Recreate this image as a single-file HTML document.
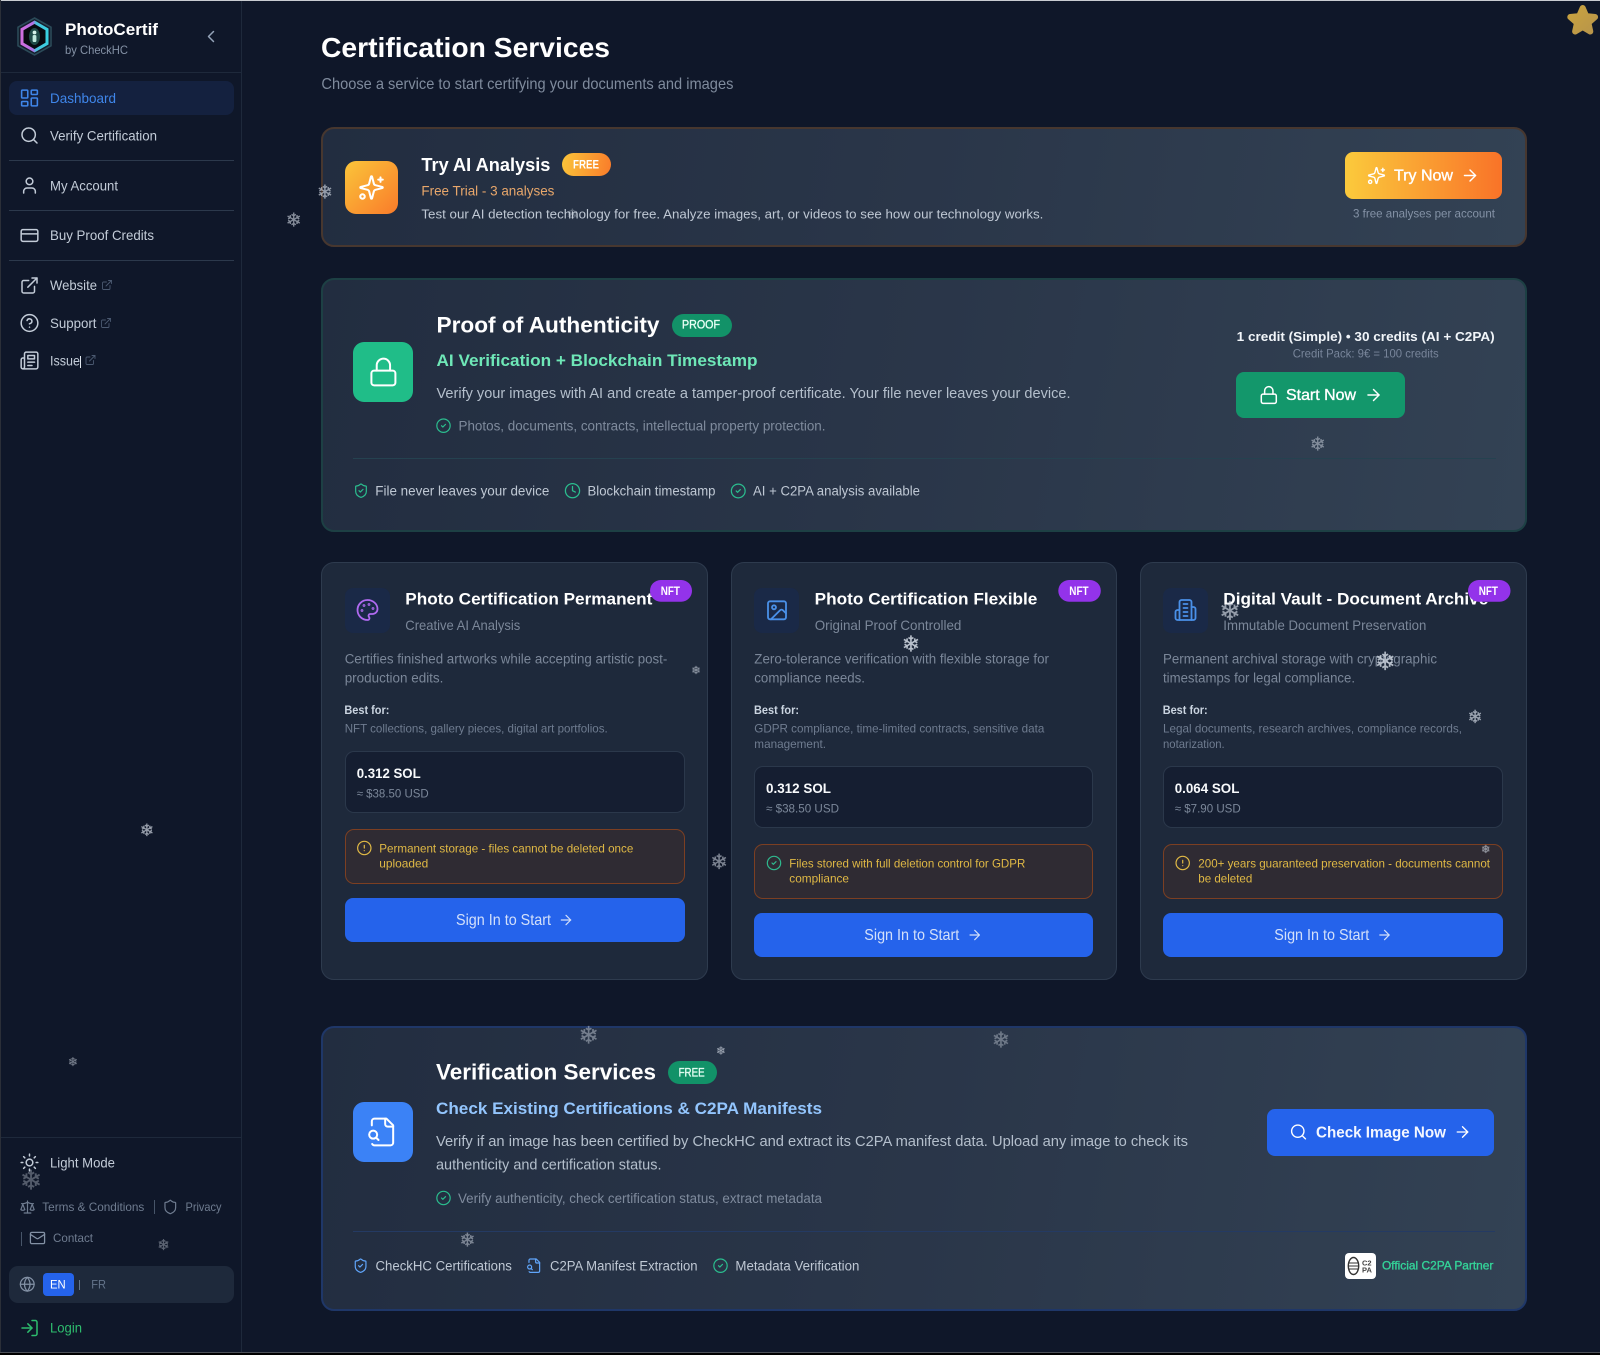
<!DOCTYPE html>
<html lang="en">
<head>
<meta charset="utf-8">
<title>PhotoCertif - Certification Services</title>
<style>
html,body{margin:0;padding:0;background:#0f1729;}
#page{position:relative;width:1600px;height:1355px;overflow:hidden;background:#0f1729;}
.b{position:absolute;box-sizing:border-box;}
.grad{background:linear-gradient(100deg,#222d40 0%,#2a3649 50%,#334254 100%);border-radius:13px;border-style:solid;border-width:2px;}
.card{background:#1e293b;border:1.5px solid #2e3b4e;border-radius:13px;}
.ico{border-radius:8px;background:#1a2947;width:45px;height:45px;top:588px;}
.price{background:#151e31;border:1.5px solid #2b384b;border-radius:9px;height:62px;}
.note{background:#2f2b33;border:1.5px solid #7c3f22;border-radius:9px;height:55px;}
.btn{background:#2563eb;border-radius:8px;height:44px;}
#ov{position:absolute;left:0;top:0;}
text{font-family:"Liberation Sans","DejaVu Sans",sans-serif;white-space:pre;}
.f{font-family:"DejaVu Sans","Liberation Sans",sans-serif;text-anchor:middle;fill:#d5dce6;stroke:#d5dce6;stroke-width:.25px;}
.m{stroke-width:.35px;}
.s{fill:none;stroke-linecap:round;stroke-linejoin:round;stroke-width:1.8;}
.n{font-size:14px;fill:#c3ccd8;}
.desc{font-size:13.5px;fill:#7b8799;}
.bf{font-size:12px;font-weight:bold;fill:#cbd5e1;}
.bt{font-size:12px;fill:#6f7c90;}
.p1{font-size:14px;font-weight:bold;fill:#f8fafc;}
.p2{font-size:12px;fill:#7b8799;}
.wn{font-size:12px;fill:#e0b945;}
.go{font-size:16px;fill:#d3e0fa;}
.ct{font-size:17px;font-weight:bold;fill:#fff;}
.cs{font-size:14px;fill:#7b8799;}
.nft{font-size:12px;font-weight:bold;fill:#fff;}
.rw{font-size:13.5px;fill:#bfc8d4;}
.dsc{font-size:14.5px;fill:#b4bfcc;}
.chk{font-size:13.5px;fill:#7f8b9d;}
.ft{font-size:12px;fill:#6f7c90;}
</style>
</head>
<body>
<div id="page">
  <!-- sidebar -->
  <div class="b" style="left:1px;top:0;width:241px;height:1352px;border-right:1px solid #1e293b;background:#0f1729"></div>
  <div class="b" style="left:1px;top:72px;width:240px;height:1px;background:#1e293b"></div>
  <div class="b" style="left:8.5px;top:81px;width:225px;height:34px;background:#14213f;border-radius:8px"></div>
  <div class="b" style="left:8.5px;top:160px;width:225.5px;height:1px;background:#2c394c"></div>
  <div class="b" style="left:8.5px;top:210px;width:225.5px;height:1px;background:#2c394c"></div>
  <div class="b" style="left:8.5px;top:260px;width:225.5px;height:1px;background:#2c394c"></div>
  <div class="b" style="left:1px;top:1137px;width:240px;height:1px;background:#1e293b"></div>
  <div class="b" style="left:8.5px;top:1266px;width:225px;height:37px;background:#1e293b;border-radius:9px"></div>
  <div class="b" style="left:42.5px;top:1273px;width:31px;height:23px;background:#2563eb;border-radius:4px"></div>
  <div class="b" style="left:153.5px;top:1200px;width:1px;height:14px;background:#475569"></div>
  <div class="b" style="left:21px;top:1232px;width:1px;height:14px;background:#475569"></div>
  <div class="b" style="left:78.5px;top:1280px;width:1px;height:10px;background:#64748b"></div>
  <div class="b" style="left:80px;top:356px;width:1px;height:12px;background:#e2e8f0"></div>

  <!-- card 1 -->
  <div class="b grad" style="left:321px;top:127px;width:1206px;height:120px;border-color:#47372f"></div>
  <div class="b" style="left:345px;top:161px;width:53px;height:53px;border-radius:11px;background:linear-gradient(135deg,#fbc53a,#f97b2a)"></div>
  <div class="b" style="left:562px;top:153px;width:49px;height:23px;border-radius:12px;background:linear-gradient(100deg,#fbc53a,#f97b2a)"></div>
  <div class="b" style="left:1345px;top:152px;width:157px;height:46.5px;border-radius:8px;background:linear-gradient(90deg,#fbca3c,#f97328)"></div>

  <!-- card 2 -->
  <div class="b grad" style="left:321px;top:278px;width:1206px;height:254px;border-color:#1d4044"></div>
  <div class="b" style="left:353px;top:342px;width:60px;height:60px;border-radius:11px;background:#20bd88"></div>
  <div class="b" style="left:671.5px;top:313.5px;width:60px;height:23px;border-radius:12px;background:#129268"></div>
  <div class="b" style="left:353px;top:458px;width:1143px;height:1px;background:#254250"></div>
  <div class="b" style="left:1236.2px;top:372px;width:168.5px;height:46px;border-radius:8px;background:#13976b"></div>

  <!-- plan cards -->
  <div class="b card" style="left:321px;top:562px;width:387px;height:418px"></div>
  <div class="b card" style="left:731px;top:562px;width:386px;height:418px"></div>
  <div class="b card" style="left:1139.5px;top:562px;width:387px;height:418px"></div>
  <div class="b ico" style="left:344.7px"></div>
  <div class="b ico" style="left:754.3px"></div>
  <div class="b ico" style="left:1163px"></div>

  <div class="b price" style="left:344.7px;top:751.3px;width:340px"></div>
  <div class="b note" style="left:344.7px;top:828.5px;width:340px"></div>
  <div class="b btn" style="left:344.7px;top:898px;width:340px"></div>

  <div class="b price" style="left:754.3px;top:766.3px;width:339px"></div>
  <div class="b note" style="left:754.3px;top:843.5px;width:339px"></div>
  <div class="b btn" style="left:754.3px;top:913px;width:339px"></div>

  <div class="b price" style="left:1163px;top:766.3px;width:340px"></div>
  <div class="b note" style="left:1163px;top:843.5px;width:340px"></div>
  <div class="b btn" style="left:1163px;top:913px;width:340px"></div>

  <!-- card 4 -->
  <div class="b grad" style="left:321px;top:1026px;width:1205.5px;height:285px;border-color:#1f3768"></div>
  <div class="b" style="left:353px;top:1102px;width:60px;height:60px;border-radius:11px;background:#3b82f6"></div>
  <div class="b" style="left:668px;top:1061px;width:48.5px;height:23px;border-radius:12px;background:#129268"></div>
  <div class="b" style="left:353px;top:1230.5px;width:1142px;height:1px;background:#243a63"></div>
  <div class="b" style="left:1266.5px;top:1109px;width:227.5px;height:46.5px;border-radius:8px;background:#2563eb"></div>
  <div class="b" style="left:1344.5px;top:1253px;width:31px;height:26px;border-radius:4px;background:#fff"></div>

  <!-- window edges -->
  <div class="b" style="left:0;top:0;width:1600px;height:1px;background:#c9ccd1"></div>
  <div class="b" style="left:0;top:0;width:1px;height:1352px;background:#2b2f38"></div>
  <div class="b" style="left:0;top:1352px;width:1600px;height:1px;background:#4b4f57"></div>
  <div class="b" style="left:0;top:1353px;width:1600px;height:2px;background:#000"></div>

  <svg id="ov" width="1600" height="1355" viewBox="0 0 1600 1355" xmlns="http://www.w3.org/2000/svg">
    <defs>
      <linearGradient id="lg" x1="0" y1="0" x2="1" y2="0"><stop offset="0" stop-color="#d06ee0"/><stop offset=".44" stop-color="#b070e4"/><stop offset=".56" stop-color="#4cc0dc"/><stop offset="1" stop-color="#38cfe0"/></linearGradient>
      <linearGradient id="star" x1="0" y1="0" x2="1" y2="1"><stop offset="0" stop-color="#c9a33f"/><stop offset="1" stop-color="#b8954a"/></linearGradient>
      <symbol id="dash" viewBox="0 0 24 24"><rect x="3" y="3" width="7" height="9" rx="1"/><rect x="14" y="3" width="7" height="5" rx="1"/><rect x="14" y="12" width="7" height="9" rx="1"/><rect x="3" y="16" width="7" height="5" rx="1"/></symbol>
      <symbol id="search" viewBox="0 0 24 24"><circle cx="11" cy="11" r="8"/><path d="m21 21-4.3-4.3"/></symbol>
      <symbol id="user" viewBox="0 0 24 24"><path d="M19 21v-2a4 4 0 0 0-4-4H9a4 4 0 0 0-4 4v2"/><circle cx="12" cy="7" r="4"/></symbol>
      <symbol id="card" viewBox="0 0 24 24"><rect x="2" y="5" width="20" height="14" rx="2"/><path d="M2 10h20"/></symbol>
      <symbol id="ext" viewBox="0 0 24 24"><path d="M15 3h6v6"/><path d="M10 14 21 3"/><path d="M18 13v6a2 2 0 0 1-2 2H5a2 2 0 0 1-2-2V8a2 2 0 0 1 2-2h6"/></symbol>
      <symbol id="help" viewBox="0 0 24 24"><circle cx="12" cy="12" r="10"/><path d="M9.09 9a3 3 0 0 1 5.83 1c0 2-3 3-3 3"/><path d="M12 17h.01"/></symbol>
      <symbol id="news" viewBox="0 0 24 24"><path d="M4 22h16a2 2 0 0 0 2-2V4a2 2 0 0 0-2-2H8a2 2 0 0 0-2 2v16a2 2 0 0 1-2 2Zm0 0a2 2 0 0 1-2-2v-9c0-1.1.9-2 2-2h2"/><path d="M18 14h-8"/><path d="M15 18h-5"/><path d="M10 6h8v4h-8V6Z"/></symbol>
      <symbol id="sun" viewBox="0 0 24 24"><circle cx="12" cy="12" r="4"/><path d="M12 2v2M12 20v2M4.93 4.93l1.41 1.41M17.66 17.66l1.41 1.41M2 12h2M20 12h2M6.34 17.66l-1.41 1.41M19.07 4.93l-1.41 1.41"/></symbol>
      <symbol id="scale" viewBox="0 0 24 24"><path d="m16 16 3-8 3 8c-.87.65-1.92 1-3 1s-2.13-.35-3-1Z"/><path d="m2 16 3-8 3 8c-.87.65-1.92 1-3 1s-2.13-.35-3-1Z"/><path d="M7 21h10"/><path d="M12 3v18"/><path d="M3 7h2c2 0 5-1 7-2 2 1 5 2 7 2h2"/></symbol>
      <symbol id="shield" viewBox="0 0 24 24"><path d="M20 13c0 5-3.5 7.5-7.66 8.95a1 1 0 0 1-.67-.01C7.5 20.5 4 18 4 13V6a1 1 0 0 1 1-1c2 0 4.5-1.2 6.24-2.72a1.17 1.17 0 0 1 1.52 0C14.51 3.81 17 5 19 5a1 1 0 0 1 1 1z"/></symbol>
      <symbol id="shieldc" viewBox="0 0 24 24"><path d="M20 13c0 5-3.5 7.5-7.66 8.95a1 1 0 0 1-.67-.01C7.5 20.5 4 18 4 13V6a1 1 0 0 1 1-1c2 0 4.5-1.2 6.24-2.72a1.17 1.17 0 0 1 1.52 0C14.51 3.81 17 5 19 5a1 1 0 0 1 1 1z"/><path d="m9 12 2 2 4-4"/></symbol>
      <symbol id="mail" viewBox="0 0 24 24"><rect x="2" y="4" width="20" height="16" rx="2"/><path d="m22 7-8.97 5.7a1.94 1.94 0 0 1-2.06 0L2 7"/></symbol>
      <symbol id="globe" viewBox="0 0 24 24"><circle cx="12" cy="12" r="10"/><path d="M12 2a14.5 14.5 0 0 0 0 20 14.5 14.5 0 0 0 0-20"/><path d="M2 12h20"/></symbol>
      <symbol id="login" viewBox="0 0 24 24"><path d="M15 3h4a2 2 0 0 1 2 2v14a2 2 0 0 1-2 2h-4"/><path d="m10 17 5-5-5-5"/><path d="M15 12H3"/></symbol>
      <symbol id="spark" viewBox="0 0 24 24"><path d="M9.937 15.5A2 2 0 0 0 8.5 14.063l-6.135-1.582a.5.5 0 0 1 0-.962L8.5 9.936A2 2 0 0 0 9.937 8.5l1.582-6.135a.5.5 0 0 1 .963 0L14.063 8.5A2 2 0 0 0 15.5 9.937l6.135 1.581a.5.5 0 0 1 0 .964L15.5 14.063a2 2 0 0 0-1.437 1.437l-1.582 6.135a.5.5 0 0 1-.963 0z"/><path d="M20 3v4"/><path d="M22 5h-4"/><circle cx="4" cy="20" r="2"/></symbol>
      <symbol id="lock" viewBox="0 0 24 24"><rect x="3" y="11" width="18" height="11" rx="2"/><path d="M7 11V7a5 5 0 0 1 10 0v4"/></symbol>
      <symbol id="arrow" viewBox="0 0 24 24"><path d="M5 12h14"/><path d="m12 5 7 7-7 7"/></symbol>
      <symbol id="check" viewBox="0 0 24 24"><circle cx="12" cy="12" r="10"/><path d="m9 12 2 2 4-4"/></symbol>
      <symbol id="clock" viewBox="0 0 24 24"><circle cx="12" cy="12" r="10"/><path d="M12 6v6l4 2"/></symbol>
      <symbol id="alert" viewBox="0 0 24 24"><circle cx="12" cy="12" r="10"/><path d="M12 8v4"/><path d="M12 16h.01"/></symbol>
      <symbol id="palette" viewBox="0 0 24 24"><path d="M12 22a1 1 0 0 1 0-20 10 9 0 0 1 10 9 5 5 0 0 1-5 5h-2.25a1.75 1.75 0 0 0-1.4 2.8l.3.4a1.75 1.75 0 0 1-1.4 2.8z"/><circle cx="13.5" cy="6.5" r=".5"/><circle cx="17.5" cy="10.5" r=".5"/><circle cx="6.5" cy="12.5" r=".5"/><circle cx="8.5" cy="7.5" r=".5"/></symbol>
      <symbol id="image" viewBox="0 0 24 24"><rect x="3" y="3" width="18" height="18" rx="2"/><circle cx="9" cy="9" r="2"/><path d="m21 15-3.086-3.086a2 2 0 0 0-2.828 0L6 21"/></symbol>
      <symbol id="bld" viewBox="0 0 24 24"><path d="M6 22V4a2 2 0 0 1 2-2h8a2 2 0 0 1 2 2v18Z"/><path d="M6 12H4a2 2 0 0 0-2 2v6a2 2 0 0 0 2 2h2"/><path d="M18 9h2a2 2 0 0 1 2 2v9a2 2 0 0 1-2 2h-2"/><path d="M10 6h4"/><path d="M10 10h4"/><path d="M10 14h4"/><path d="M10 18h4"/></symbol>
      <symbol id="fsearch" viewBox="0 0 24 24"><path d="M14 2v4a2 2 0 0 0 2 2h4"/><path d="M4.268 21a2 2 0 0 0 1.727 1H18a2 2 0 0 0 2-2V7l-5-5H6a2 2 0 0 0-2 2v3"/><path d="m9 18-1.5-1.5"/><circle cx="5" cy="14" r="3"/></symbol>
      <symbol id="chev" viewBox="0 0 24 24"><path d="m15 18-6-6 6-6"/></symbol>
    </defs>

    <!-- logo -->
    <polygon points="34.5,18 51,27.25 51,45.75 34.5,55 18,45.75 18,27.25" fill="#141c2b" stroke="#2b4a58" stroke-width="1.6"/>
    <polygon points="34.5,22.2 47,29.4 47,43.6 34.5,50.8 22,43.6 22,29.4" fill="#070a11" stroke="url(#lg)" stroke-width="3"/>
    <ellipse cx="34.5" cy="36.5" rx="5.5" ry="8.5" fill="#1f4a47"/>
    <circle cx="34.5" cy="32.5" r="1.9" fill="#d4f1e8"/>
    <rect x="32.6" y="35" width="3.8" height="7" rx="1.4" fill="#bfe8dc"/>

    <!-- sidebar text -->
    <text x="65" y="35" font-size="17" font-weight="bold" fill="#fff" textLength="93" lengthAdjust="spacingAndGlyphs">PhotoCertif</text>
    <text x="65" y="54" font-size="12" fill="#8491a5" textLength="63" lengthAdjust="spacingAndGlyphs">by CheckHC</text>
    <use href="#chev" x="201" y="26.5" width="20" height="20" class="s" stroke="#94a3b8"/>

    <use href="#dash" x="19" y="87.5" width="21" height="21" class="s" stroke="#3f86ea"/>
    <text x="50" y="103" font-size="14" fill="#3f86ea" textLength="66" lengthAdjust="spacingAndGlyphs">Dashboard</text>
    <use href="#search" x="19.5" y="125.5" width="20" height="20" class="s" stroke="#c3ccd8"/>
    <text x="50" y="140.5" class="n" textLength="107" lengthAdjust="spacingAndGlyphs">Verify Certification</text>
    <use href="#user" x="19.5" y="175.5" width="20" height="20" class="s" stroke="#c3ccd8"/>
    <text x="50" y="190.5" class="n" textLength="68" lengthAdjust="spacingAndGlyphs">My Account</text>
    <use href="#card" x="19.5" y="225.5" width="20" height="20" class="s" stroke="#c3ccd8"/>
    <text x="50" y="240" class="n" textLength="104" lengthAdjust="spacingAndGlyphs">Buy Proof Credits</text>
    <use href="#ext" x="19.5" y="275.5" width="20" height="20" class="s" stroke="#c3ccd8"/>
    <text x="50" y="290" class="n" textLength="47" lengthAdjust="spacingAndGlyphs">Website</text>
    <use href="#ext" x="101" y="279" width="12" height="12" class="s" stroke="#4b5970"/>
    <use href="#help" x="19.5" y="313" width="20" height="20" class="s" stroke="#c3ccd8"/>
    <text x="50" y="328" class="n" textLength="46.5" lengthAdjust="spacingAndGlyphs">Support</text>
    <use href="#ext" x="100" y="317" width="12" height="12" class="s" stroke="#4b5970"/>
    <use href="#news" x="19.5" y="350.5" width="20" height="20" class="s" stroke="#c3ccd8"/>
    <text x="50" y="365.5" class="n" textLength="30" lengthAdjust="spacingAndGlyphs">Issue</text>
    <use href="#ext" x="84.5" y="354" width="12" height="12" class="s" stroke="#4b5970"/>

    <use href="#sun" x="19.5" y="1152.5" width="20" height="20" class="s" stroke="#c3ccd8"/>
    <text x="50" y="1167.5" class="n" textLength="65" lengthAdjust="spacingAndGlyphs">Light Mode</text>
    <use href="#scale" x="19.5" y="1199" width="16" height="16" class="s" stroke="#6f7c90"/>
    <text x="42.3" y="1211" class="ft" textLength="102" lengthAdjust="spacingAndGlyphs">Terms &amp; Conditions</text>
    <use href="#shield" x="162.3" y="1199" width="16" height="16" class="s" stroke="#6f7c90"/>
    <text x="185.5" y="1211" class="ft" textLength="36" lengthAdjust="spacingAndGlyphs">Privacy</text>
    <use href="#mail" x="29" y="1229.5" width="17" height="17" class="s" stroke="#8391a5"/>
    <text x="53" y="1242" class="ft" textLength="40" lengthAdjust="spacingAndGlyphs">Contact</text>
    <use href="#globe" x="19" y="1276" width="16.5" height="16.5" class="s" stroke="#8391a5"/>
    <text x="50" y="1288.5" font-size="12" fill="#fff" textLength="15.7" lengthAdjust="spacingAndGlyphs">EN</text>
    <text x="91.3" y="1288.5" font-size="12" fill="#64748b" textLength="14.7" lengthAdjust="spacingAndGlyphs">FR</text>
    <use href="#login" x="19.5" y="1318" width="20" height="20" class="s" stroke="#2ebd6e"/>
    <text x="50" y="1332.7" font-size="14" fill="#2ebd6e" textLength="32" lengthAdjust="spacingAndGlyphs">Login</text>

    <!-- heading -->
    <text x="321" y="57" font-size="28" font-weight="bold" fill="#fff" textLength="289" lengthAdjust="spacingAndGlyphs">Certification Services</text>
    <text x="321.4" y="89" font-size="16" fill="#7f8b9d" textLength="412" lengthAdjust="spacingAndGlyphs">Choose a service to start certifying your documents and images</text>

    <!-- card 1 -->
    <use href="#spark" x="358" y="174" width="27" height="27" class="s" stroke="#fff"/>
    <text x="421.4" y="171" font-size="18" font-weight="bold" fill="#fff" textLength="129" lengthAdjust="spacingAndGlyphs">Try AI Analysis</text>
    <text x="573" y="168.3" font-size="12" font-weight="bold" fill="#fff" textLength="26" lengthAdjust="spacingAndGlyphs">FREE</text>
    <text x="421.4" y="195.7" font-size="14" fill="#e8a76b" textLength="133" lengthAdjust="spacingAndGlyphs">Free Trial - 3 analyses</text>
    <text x="421.4" y="218.3" font-size="13" fill="#bfc8d4" textLength="622" lengthAdjust="spacingAndGlyphs">Test our AI detection technology for free. Analyze images, art, or videos to see how our technology works.</text>
    <use href="#spark" x="1367" y="166" width="19" height="19" class="s" stroke="#fff"/>
    <text x="1394" y="180.5" font-size="16" fill="#fff" stroke="#fff" class="m" textLength="59" lengthAdjust="spacingAndGlyphs">Try Now</text>
    <use href="#arrow" x="1460.5" y="166" width="19" height="19" class="s" stroke="#fff"/>
    <text x="1353" y="217.3" font-size="12" fill="#8492a6" textLength="142" lengthAdjust="spacingAndGlyphs">3 free analyses per account</text>

    <!-- card 2 -->
    <use href="#lock" x="367.4" y="356" width="32" height="32" class="s" stroke="#fff" style="stroke-width:1.5"/>
    <text x="436.5" y="332.5" font-size="22" font-weight="bold" fill="#fff" textLength="223" lengthAdjust="spacingAndGlyphs">Proof of Authenticity</text>
    <text x="682" y="328.7" font-size="12" fill="#e8fff5" stroke="#e8fff5" class="m" textLength="38" lengthAdjust="spacingAndGlyphs">PROOF</text>
    <text x="436.5" y="366" font-size="17" font-weight="bold" fill="#6ee7b7" textLength="321" lengthAdjust="spacingAndGlyphs">AI Verification + Blockchain Timestamp</text>
    <text x="436.5" y="398" class="dsc" textLength="634" lengthAdjust="spacingAndGlyphs">Verify your images with AI and create a tamper-proof certificate. Your file never leaves your device.</text>
    <use href="#check" x="435.5" y="417.7" width="16" height="16" class="s" stroke="#2bbd8e"/>
    <text x="458.5" y="430.3" class="chk" textLength="367" lengthAdjust="spacingAndGlyphs">Photos, documents, contracts, intellectual property protection.</text>
    <use href="#shieldc" x="353" y="482.7" width="16" height="16" class="s" stroke="#2bbd8e"/>
    <text x="375.3" y="495.7" class="rw" textLength="174" lengthAdjust="spacingAndGlyphs">File never leaves your device</text>
    <use href="#clock" x="564" y="482.2" width="17" height="17" class="s" stroke="#2bbd8e"/>
    <text x="587.5" y="495.7" class="rw" textLength="128" lengthAdjust="spacingAndGlyphs">Blockchain timestamp</text>
    <use href="#check" x="730" y="482.7" width="16.5" height="16.5" class="s" stroke="#2bbd8e"/>
    <text x="753" y="495.7" class="rw" textLength="167" lengthAdjust="spacingAndGlyphs">AI + C2PA analysis available</text>
    <text x="1236.7" y="341" font-size="13" font-weight="bold" fill="#f1f5f9" textLength="258" lengthAdjust="spacingAndGlyphs">1 credit (Simple) • 30 credits (AI + C2PA)</text>
    <text x="1292.7" y="357.3" font-size="12" fill="#78859a" textLength="146" lengthAdjust="spacingAndGlyphs">Credit Pack: 9€ = 100 credits</text>
    <use href="#lock" x="1258.8" y="385" width="20" height="20" class="s" stroke="#fff"/>
    <text x="1286" y="400" font-size="16" fill="#fff" stroke="#fff" class="m" textLength="70" lengthAdjust="spacingAndGlyphs">Start Now</text>
    <use href="#arrow" x="1364" y="385.5" width="19" height="19" class="s" stroke="#fff"/>

    <!-- plan A -->
    <use href="#palette" x="355.5" y="598" width="24" height="24" class="s" stroke="#b06af0"/>
    <text x="405.3" y="604.3" class="ct" textLength="247" lengthAdjust="spacingAndGlyphs">Photo Certification Permanent</text>
    <rect x="650" y="580" width="42" height="21.7" rx="10.8" fill="#9333ea"/>
    <text x="660.7" y="595" class="nft" textLength="19.3" lengthAdjust="spacingAndGlyphs">NFT</text>
    <text x="405.3" y="630" class="cs" textLength="115" lengthAdjust="spacingAndGlyphs">Creative AI Analysis</text>
    <text x="344.7" y="663.6" class="desc" textLength="322.6" lengthAdjust="spacingAndGlyphs">Certifies finished artworks while accepting artistic post-</text>
    <text x="344.7" y="682.6" class="desc" textLength="98.7" lengthAdjust="spacingAndGlyphs">production edits.</text>
    <text x="344.4" y="714" class="bf" textLength="45" lengthAdjust="spacingAndGlyphs">Best for:</text>
    <text x="344.7" y="732.7" class="bt" textLength="263" lengthAdjust="spacingAndGlyphs">NFT collections, gallery pieces, digital art portfolios.</text>
    <text x="356.7" y="778" class="p1" textLength="64" lengthAdjust="spacingAndGlyphs">0.312 SOL</text>
    <text x="356.7" y="797.7" class="p2" textLength="72" lengthAdjust="spacingAndGlyphs">≈ $38.50 USD</text>
    <use href="#alert" x="356.3" y="840" width="16" height="16" class="s" stroke="#e0b945"/>
    <text x="379.3" y="852.3" class="wn" textLength="254" lengthAdjust="spacingAndGlyphs">Permanent storage - files cannot be deleted once</text>
    <text x="379.3" y="867.7" class="wn" textLength="49" lengthAdjust="spacingAndGlyphs">uploaded</text>
    <text x="456" y="925" class="go" textLength="95" lengthAdjust="spacingAndGlyphs">Sign In to Start</text>
    <use href="#arrow" x="558" y="912" width="16" height="16" class="s" stroke="#d3e0fa"/>

    <!-- plan B -->
    <use href="#image" x="765" y="598.3" width="24" height="24" class="s" stroke="#4a90e8"/>
    <text x="814.7" y="604.3" class="ct" textLength="222.7" lengthAdjust="spacingAndGlyphs">Photo Certification Flexible</text>
    <rect x="1058.3" y="580" width="42.5" height="21.7" rx="10.8" fill="#9333ea"/>
    <text x="1069.3" y="595" class="nft" textLength="19.3" lengthAdjust="spacingAndGlyphs">NFT</text>
    <text x="814.7" y="630" class="cs" textLength="146.7" lengthAdjust="spacingAndGlyphs">Original Proof Controlled</text>
    <text x="754.3" y="663.6" class="desc" textLength="294.7" lengthAdjust="spacingAndGlyphs">Zero-tolerance verification with flexible storage for</text>
    <text x="754.3" y="682.6" class="desc" textLength="110.7" lengthAdjust="spacingAndGlyphs">compliance needs.</text>
    <text x="754" y="714" class="bf" textLength="45" lengthAdjust="spacingAndGlyphs">Best for:</text>
    <text x="754.3" y="732.7" class="bt" textLength="290" lengthAdjust="spacingAndGlyphs">GDPR compliance, time-limited contracts, sensitive data</text>
    <text x="754.3" y="748" class="bt" textLength="71.7" lengthAdjust="spacingAndGlyphs">management.</text>
    <text x="766" y="793" class="p1" textLength="65" lengthAdjust="spacingAndGlyphs">0.312 SOL</text>
    <text x="766" y="812.7" class="p2" textLength="73" lengthAdjust="spacingAndGlyphs">≈ $38.50 USD</text>
    <use href="#check" x="766" y="855" width="16" height="16" class="s" stroke="#2fb98e"/>
    <text x="789.3" y="867.3" class="wn" textLength="236" lengthAdjust="spacingAndGlyphs">Files stored with full deletion control for GDPR</text>
    <text x="789.3" y="882.7" class="wn" textLength="59.7" lengthAdjust="spacingAndGlyphs">compliance</text>
    <text x="864.3" y="940" class="go" textLength="95" lengthAdjust="spacingAndGlyphs">Sign In to Start</text>
    <use href="#arrow" x="966.7" y="927" width="16" height="16" class="s" stroke="#d3e0fa"/>

    <!-- plan C -->
    <use href="#bld" x="1173.5" y="598" width="24" height="24" class="s" stroke="#4a90e8"/>
    <text x="1223.3" y="604.3" class="ct" textLength="265" lengthAdjust="spacingAndGlyphs">Digital Vault - Document Archive</text>
    <rect x="1468" y="580" width="42.5" height="21.7" rx="10.8" fill="#9333ea"/>
    <text x="1478.7" y="595" class="nft" textLength="19.3" lengthAdjust="spacingAndGlyphs">NFT</text>
    <text x="1223.3" y="630" class="cs" textLength="203" lengthAdjust="spacingAndGlyphs">Immutable Document Preservation</text>
    <text x="1163" y="663.6" class="desc" textLength="274" lengthAdjust="spacingAndGlyphs">Permanent archival storage with cryptographic</text>
    <text x="1163" y="682.6" class="desc" textLength="192" lengthAdjust="spacingAndGlyphs">timestamps for legal compliance.</text>
    <text x="1162.7" y="714" class="bf" textLength="45" lengthAdjust="spacingAndGlyphs">Best for:</text>
    <text x="1163" y="732.7" class="bt" textLength="299" lengthAdjust="spacingAndGlyphs">Legal documents, research archives, compliance records,</text>
    <text x="1163" y="748" class="bt" textLength="61.7" lengthAdjust="spacingAndGlyphs">notarization.</text>
    <text x="1174.7" y="793" class="p1" textLength="64.7" lengthAdjust="spacingAndGlyphs">0.064 SOL</text>
    <text x="1174.7" y="812.7" class="p2" textLength="66" lengthAdjust="spacingAndGlyphs">≈ $7.90 USD</text>
    <use href="#alert" x="1174.7" y="855" width="16" height="16" class="s" stroke="#e0b945"/>
    <text x="1198.3" y="867.3" class="wn" textLength="291.7" lengthAdjust="spacingAndGlyphs">200+ years guaranteed preservation - documents cannot</text>
    <text x="1198.3" y="882.7" class="wn" textLength="54" lengthAdjust="spacingAndGlyphs">be deleted</text>
    <text x="1274.3" y="940" class="go" textLength="95" lengthAdjust="spacingAndGlyphs">Sign In to Start</text>
    <use href="#arrow" x="1376.5" y="927" width="16" height="16" class="s" stroke="#d3e0fa"/>

    <!-- card 4 -->
    <use href="#fsearch" x="366.5" y="1116" width="32" height="32" class="s" stroke="#fff" style="stroke-width:1.5"/>
    <text x="436" y="1079.7" font-size="22" font-weight="bold" fill="#fff" textLength="220" lengthAdjust="spacingAndGlyphs">Verification Services</text>
    <text x="678.6" y="1076.7" font-size="12" fill="#e8fff5" stroke="#e8fff5" class="m" textLength="26" lengthAdjust="spacingAndGlyphs">FREE</text>
    <text x="436" y="1114" font-size="17" font-weight="bold" fill="#93c5fd" textLength="386" lengthAdjust="spacingAndGlyphs">Check Existing Certifications &amp; C2PA Manifests</text>
    <text x="436" y="1146" class="dsc" textLength="752" lengthAdjust="spacingAndGlyphs">Verify if an image has been certified by CheckHC and extract its C2PA manifest data. Upload any image to check its</text>
    <text x="436" y="1169.7" class="dsc" textLength="225.5" lengthAdjust="spacingAndGlyphs">authenticity and certification status.</text>
    <use href="#check" x="435.5" y="1190" width="16" height="16" class="s" stroke="#2bbd8e"/>
    <text x="458" y="1203" class="chk" textLength="364" lengthAdjust="spacingAndGlyphs">Verify authenticity, check certification status, extract metadata</text>
    <use href="#shieldc" x="352.6" y="1257.7" width="16" height="16" class="s" stroke="#60a5fa"/>
    <text x="375.5" y="1270.7" class="rw" textLength="136.4" lengthAdjust="spacingAndGlyphs">CheckHC Certifications</text>
    <use href="#fsearch" x="526.3" y="1257.7" width="16" height="16" class="s" stroke="#60a5fa"/>
    <text x="550" y="1270.7" class="rw" textLength="147.6" lengthAdjust="spacingAndGlyphs">C2PA Manifest Extraction</text>
    <use href="#check" x="712.5" y="1257.7" width="16" height="16" class="s" stroke="#2bbd8e"/>
    <text x="735.4" y="1270.7" class="rw" textLength="124" lengthAdjust="spacingAndGlyphs">Metadata Verification</text>
    <use href="#search" x="1289.3" y="1122.7" width="18.5" height="18.5" class="s" stroke="#fff"/>
    <text x="1316" y="1137.5" font-size="16" font-weight="bold" fill="#f4f7ff" textLength="130" lengthAdjust="spacingAndGlyphs">Check Image Now</text>
    <use href="#arrow" x="1453.5" y="1123" width="18" height="18" class="s" stroke="#fff"/>
    <ellipse cx="1353.5" cy="1266" rx="5.2" ry="8.5" fill="none" stroke="#333" stroke-width="1.4"/>
    <path d="M1348.5 1263h10M1348.5 1266h10M1348.5 1269h10" stroke="#333" stroke-width="1"/>
    <text x="1362" y="1265.5" font-size="7.5" font-weight="bold" fill="#444">C2</text>
    <text x="1362" y="1272.5" font-size="7.5" font-weight="bold" fill="#444">PA</text>
    <text x="1382" y="1269.3" font-size="12" fill="#34d399" stroke="#34d399" class="m" textLength="111.4" lengthAdjust="spacingAndGlyphs">Official C2PA Partner</text>

    <!-- star -->
    <polygon points="1582.7,8 1586.2,16.1 1595.1,17 1588.4,22.9 1590.3,31.5 1582.7,27 1575.1,31.5 1577,22.9 1570.3,17 1579.2,16.1" fill="url(#star)" stroke="url(#star)" stroke-width="6" stroke-linejoin="round"/>

    <!-- snowflakes -->
    <g class="flakes">
      <text class="f" x="325" y="198.6" font-size="19" opacity=".65">❄</text>
      <text class="f" x="293.7" y="226.6" font-size="19" opacity=".6">❄</text>
      <text class="f" x="572.4" y="219" font-size="14" opacity=".35">❄</text>
      <text class="f" x="1317.7" y="450.6" font-size="19" opacity=".5">❄</text>
      <text class="f" x="147" y="836" font-size="17" opacity=".7">❄</text>
      <text class="f" x="73" y="1066" font-size="12" opacity=".5">❄</text>
      <text class="f" x="31" y="1189.5" font-size="27" opacity=".35">❄</text>
      <text class="f" x="163.7" y="1250" font-size="15" opacity=".4">❄</text>
      <text class="f" x="696" y="674" font-size="11" opacity=".6">❄</text>
      <text class="f" x="719" y="869" font-size="21" opacity=".55">❄</text>
      <text class="f" x="911" y="651.7" font-size="22" opacity=".85">❄</text>
      <text class="f" x="1230" y="620" font-size="26" opacity=".65">❄</text>
      <text class="f" x="1385" y="670" font-size="25" opacity=".8">❄</text>
      <text class="f" x="1475" y="723" font-size="18" opacity=".7">❄</text>
      <text class="f" x="1485.7" y="853" font-size="11" opacity=".6">❄</text>
      <text class="f" x="588.6" y="1043.4" font-size="24" opacity=".45">❄</text>
      <text class="f" x="720.9" y="1054.5" font-size="11" opacity=".65">❄</text>
      <text class="f" x="1001" y="1047.7" font-size="22" opacity=".4">❄</text>
      <text class="f" x="467.5" y="1246.6" font-size="19" opacity=".5">❄</text>
    </g>
  </svg>
</div>
</body>
</html>
